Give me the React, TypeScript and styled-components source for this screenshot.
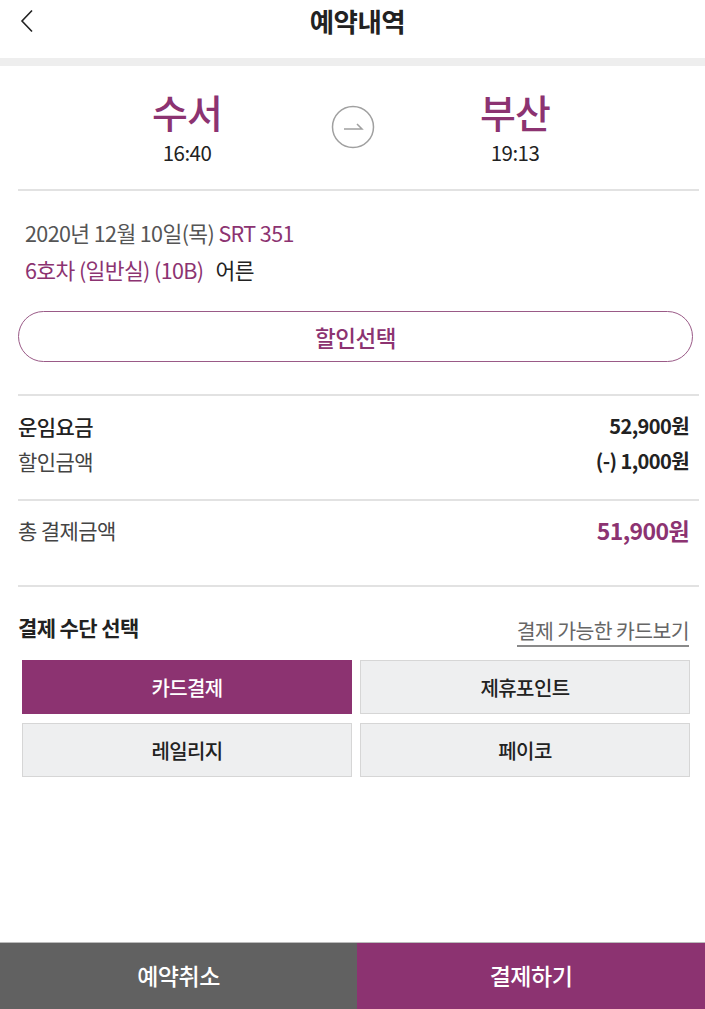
import React from 'react';
import styled, { createGlobalStyle } from 'styled-components';

const PURPLE = '#8c3371';

const GlobalStyle = createGlobalStyle`
  html, body {
    margin: 0;
    padding: 0;
    background: #fff;
  }
  body {
    font-family: 'Noto Sans CJK KR', 'Noto Sans', sans-serif;
    color: #222;
  }
  * {
    box-sizing: border-box;
  }
`;

const Page = styled.div`
  display: flex;
  flex-direction: column;
  min-height: 100vh;
`;

const Header = styled.header`
  position: relative;
  display: flex;
  justify-content: center;
  height: 58px;
  padding-top: 4px;
`;

const BackButton = styled.button`
  position: absolute;
  left: 14px;
  top: 6px;
  display: flex;
  align-items: center;
  justify-content: center;
  width: 26px;
  height: 30px;
  padding: 0;
  border: none;
  background: none;
`;

const Title = styled.h1`
  margin: 0 0 0 10px;
  font-size: 26.5px;
  line-height: 34px;
  font-weight: 700;
  color: #222;
  letter-spacing: -0.5px;
`;

const Band = styled.div`
  height: 8px;
  background: #eeeeee;
`;

const Content = styled.main`
  flex: 1;
  padding: 0 6px 0 18px;
`;

const Section = styled.section<{ $top: number; $bottom: number; $noBorder?: boolean }>`
  padding: ${(p) => p.$top}px 0 ${(p) => p.$bottom}px;
  border-bottom: ${(p) => (p.$noBorder ? 'none' : '2px solid #e2e2e2')};
`;

const Route = styled.div`
  display: flex;
  justify-content: center;
  align-items: center;
  gap: 0;
  padding-right: 15px;
`;

const Station = styled.div`
  display: flex;
  flex-direction: column;
  align-items: center;
  gap: 6px;
  width: 160px;
`;

const CircleSlot = styled.div`
  display: flex;
  justify-content: center;
  width: 44px;
  margin: 0 60px 0 64px;
`;

const City = styled.div`
  font-size: 39px;
  line-height: 44px;
  font-weight: 500;
  color: ${PURPLE};
  letter-spacing: -1px;
`;

const Time = styled.div`
  font-size: 20.5px;
  line-height: 26px;
  color: #222;
  letter-spacing: -0.5px;
`;

const Info = styled.div`
  padding-left: 7px;
`;

const InfoLine = styled.div`
  font-size: 21.5px;
  line-height: 37px;
  color: #555;
  letter-spacing: -0.6px;
`;

const Accent = styled.span`
  color: ${PURPLE};
`;

const Dark = styled.span`
  color: #222;
  margin-left: 12px;
`;

const DiscountButton = styled.button`
  display: block;
  width: calc(100% - 6px);
  height: 51px;
  margin-top: 23px;
  border: 1.5px solid #9a5a87;
  border-radius: 26px;
  background: #fff;
  color: ${PURPLE};
  font-family: inherit;
  font-size: 22.5px;
  font-weight: 500;
  letter-spacing: -0.5px;
`;

const FareRow = styled.div<{ $height: number }>`
  display: flex;
  justify-content: space-between;
  align-items: center;
  height: ${(p) => p.$height}px;
  padding-right: 10px;
`;

const FareLabel = styled.span<{ $muted?: boolean }>`
  font-size: 21px;
  font-weight: ${(p) => (p.$muted ? 400 : 500)};
  color: ${(p) => (p.$muted ? '#444' : '#222')};
  letter-spacing: -0.6px;
`;

const FareValue = styled.span<{ $accent?: boolean }>`
  font-size: ${(p) => (p.$accent ? '23px' : '20px')};
  font-weight: 700;
  color: ${(p) => (p.$accent ? PURPLE : '#222')};
  letter-spacing: -0.6px;
`;

const PayHead = styled.div`
  display: flex;
  justify-content: space-between;
  align-items: center;
  height: 34px;
  margin-top: 23px;
  padding-right: 10px;
`;

const PayTitle = styled.h2`
  margin: 0;
  font-size: 21px;
  font-weight: 700;
  color: #222;
  letter-spacing: -0.6px;
`;

const CardLink = styled.a`
  font-size: 20.5px;
  line-height: 24px;
  color: #666;
  text-decoration: none;
  border-bottom: 2px solid #8a8a8a;
  padding-bottom: 3px;
  margin-top: 10px;
  letter-spacing: -0.6px;
`;

const MethodGrid = styled.div`
  display: grid;
  grid-template-columns: 1fr 1fr;
  column-gap: 8px;
  row-gap: 9px;
  margin: 16px 9px 0 4px;
`;

const MethodButton = styled.button<{ $active?: boolean }>`
  height: 54px;
  border: 1.5px solid ${(p) => (p.$active ? PURPLE : '#d6d6d6')};
  background: ${(p) => (p.$active ? PURPLE : '#eeeff0')};
  color: ${(p) => (p.$active ? '#fff' : '#222')};
  font-family: inherit;
  font-size: 20px;
  font-weight: 500;
  letter-spacing: -0.6px;
`;

const Footer = styled.footer`
  display: grid;
  grid-template-columns: 357px 1fr;
  height: 67px;
  border-top: 1px solid #bbb;
`;

const FooterButton = styled.button<{ $primary?: boolean }>`
  border: none;
  background: ${(p) => (p.$primary ? PURPLE : '#616161')};
  color: #fff;
  font-family: inherit;
  font-size: 23px;
  font-weight: 500;
  letter-spacing: -0.5px;
  padding-bottom: 4px;
`;

const ArrowCircle = () => (
  <svg width="44" height="44" viewBox="0 0 44 44">
    <circle cx="22" cy="22" r="20.5" fill="none" stroke="#a0a0a0" strokeWidth="1.5" />
    <path d="M13 24 H31 L26 19" fill="none" stroke="#a0a0a0" strokeWidth="1.5" />
  </svg>
);

const methods = [
  { label: '카드결제', active: true },
  { label: '제휴포인트' },
  { label: '레일리지' },
  { label: '페이코' },
];

export default function App() {
  return (
    <Page>
      <GlobalStyle />
      <Header>
        <BackButton aria-label="뒤로">
          <svg width="16" height="24" viewBox="0 0 16 24">
            <path d="M13 1.5 L3 12 L13 22.5" fill="none" stroke="#222" strokeWidth="1.6" />
          </svg>
        </BackButton>
        <Title>예약내역</Title>
      </Header>
      <Band />
      <Content>
        <Section $top={23} $bottom={24}>
          <Route>
            <Station>
              <City>수서</City>
              <Time>16:40</Time>
            </Station>
            <CircleSlot>
              <ArrowCircle />
            </CircleSlot>
            <Station>
              <City>부산</City>
              <Time>19:13</Time>
            </Station>
          </Route>
        </Section>

        <Section $top={23} $bottom={32}>
          <Info>
            <InfoLine>
              2020년 12월 10일(목) <Accent>SRT 351</Accent>
            </InfoLine>
            <InfoLine>
              <Accent>6호차 (일반실) (10B)</Accent>
              <Dark>어른</Dark>
            </InfoLine>
          </Info>
          <DiscountButton>할인선택</DiscountButton>
        </Section>

        <Section $top={12} $bottom={21}>
          <FareRow $height={35}>
            <FareLabel>운임요금</FareLabel>
            <FareValue>52,900원</FareValue>
          </FareRow>
          <FareRow $height={35}>
            <FareLabel $muted>할인금액</FareLabel>
            <FareValue>(-) 1,000원</FareValue>
          </FareRow>
        </Section>

        <Section $top={11} $bottom={37}>
          <FareRow $height={36}>
            <FareLabel $muted>총 결제금액</FareLabel>
            <FareValue $accent>51,900원</FareValue>
          </FareRow>
        </Section>

        <Section $top={0} $bottom={0} $noBorder>
          <PayHead>
            <PayTitle>결제 수단 선택</PayTitle>
            <CardLink href="#">결제 가능한 카드보기</CardLink>
          </PayHead>
          <MethodGrid>
            {methods.map((m) => (
              <MethodButton key={m.label} $active={m.active}>
                {m.label}
              </MethodButton>
            ))}
          </MethodGrid>
        </Section>
      </Content>
      <Footer>
        <FooterButton>예약취소</FooterButton>
        <FooterButton $primary>결제하기</FooterButton>
      </Footer>
    </Page>
  );
}
